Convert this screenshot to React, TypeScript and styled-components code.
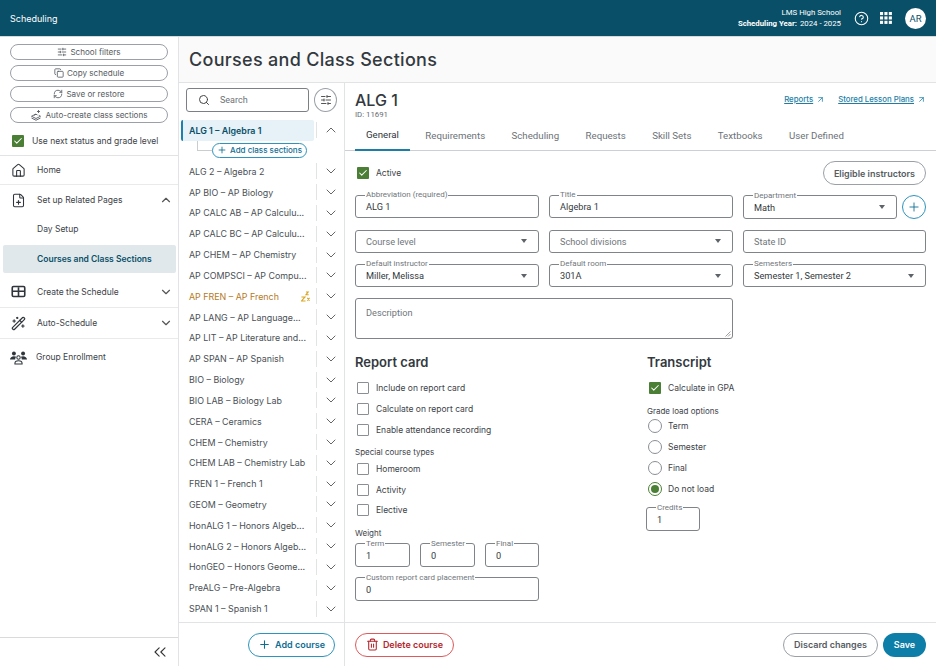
import React from "react";
import styled, { createGlobalStyle } from "styled-components";
import {
  ArrowUpRight,
  Check,
  ChevronDown,
  ChevronUp,
  ChevronsLeft,
  CircleHelp,
  Copy,
  FilePlus,
  House,
  Plus,
  RefreshCw,
  Search,
  SlidersHorizontal,
  Trash2,
  WandSparkles,
} from "lucide-react";

const GlobalStyle = createGlobalStyle`
  html, body {
    margin: 0;
    padding: 0;
    background: #fff;
  }
  body {
    font-family: "Inter", "Liberation Sans", sans-serif;
    color: #3d4349;
  }
  * {
    box-sizing: border-box;
  }
`;

const courses = [
  "ALG 2 – Algebra 2",
  "AP BIO – AP Biology",
  "AP CALC AB – AP Calculu...",
  "AP CALC BC – AP Calculu...",
  "AP CHEM – AP Chemistry",
  "AP COMPSCI – AP Compu...",
  "AP FREN – AP French",
  "AP LANG – AP Language...",
  "AP LIT – AP Literature and...",
  "AP SPAN – AP Spanish",
  "BIO – Biology",
  "BIO LAB – Biology Lab",
  "CERA – Ceramics",
  "CHEM – Chemistry",
  "CHEM LAB – Chemistry Lab",
  "FREN 1 – French 1",
  "GEOM – Geometry",
  "HonALG 1 – Honors Algeb...",
  "HonALG 2 – Honors Algeb...",
  "HonGEO – Honors Geome...",
  "PreALG – Pre-Algebra",
  "SPAN 1 – Spanish 1",
];

const tabs = ["General", "Requirements", "Scheduling", "Requests", "Skill Sets", "Textbooks", "User Defined"];

const AutoIcon = () => (
  <svg width="12" height="12" viewBox="0 0 24 24" fill="none" stroke="currentColor" strokeWidth="1.8">
    <path d="M12 10 3 14.5l9 4.5 9-4.5-3.5-1.8" />
    <path d="M3 18l9 4.5 9-4.5" />
    <path d="M8 12.5l4-2 3 1.5" />
    <path d="M17 2v6M14 5h6" />
  </svg>
);

const ScheduleIcon = () => (
  <svg width="15" height="15" viewBox="0 0 24 24" fill="none" stroke="#2f353a" strokeWidth="2.6">
    <rect x="2" y="4" width="20" height="16" rx="2" />
    <path d="M2 11.5h20M12 5v15" />
  </svg>
);

const GroupIcon = () => (
  <svg width="17" height="15" viewBox="0 0 26 22" fill="#2f353a">
    <circle cx="6" cy="5" r="3" />
    <circle cx="20" cy="5" r="3" />
    <path d="M0 14c0-3 3-5 6-5 1.500 0 2.500.4 3.400 1-1 1-1.500 2.400-1.500 4z" />
    <path d="M26 14c0-3-3-5-6-5-1.500 0-2.500.4-3.400 1 1 1 1.500 2.400 1.500 4z" />
    <circle cx="13" cy="11" r="2.600" fill="none" stroke="#2f353a" strokeWidth="1.600" />
    <path d="M7.500 21v-1c0-2.500 2.500-4 5.500-4s5.500 1.500 5.500 4v1z" fill="none" stroke="#2f353a" strokeWidth="1.600" />
  </svg>
);

const SleepIcon = () => (
  <svg width="9" height="11" viewBox="0 0 20 24" fill="none" stroke="#d9a520" strokeWidth="2.4">
    <path d="M1 13h8L1 22h9" />
    <path d="M11 2h5l-5 6h6" />
    <path d="M14 15l5 6M19 15l-5 6" />
  </svg>
);

const GridIcon = () => (
  <svg width="12" height="12" viewBox="0 0 12 12" fill="#fff">
    {[0, 4.4, 8.8].map((y) =>
      [0, 4.4, 8.8].map((x) => <rect key={`${x}-${y}`} x={x} y={y} width="3.1" height="3.1" />)
    )}
  </svg>
);

const ResizeIcon = () => (
  <svg width="6" height="6" viewBox="0 0 6 6" stroke="#777" strokeWidth="0.7">
    <path d="M0.5 5.5 5.5 0.5M3 5.5 5.5 3" />
  </svg>
);

const Field = ({
  label,
  value,
  placeholder,
  select,
  width,
}: {
  label?: string;
  value?: string;
  placeholder?: string;
  select?: boolean;
  width?: number;
}) => (
  <FieldBox $width={width} $plain={!label}>
    {label && <FieldLabel>{label}</FieldLabel>}
    <FieldRow $plain={!label}>
      {value ? <FieldValue>{value}</FieldValue> : <FieldHint>{placeholder}</FieldHint>}
      {select && <Caret />}
    </FieldRow>
  </FieldBox>
);

const CheckRow = ({ label, on }: { label: string; on?: boolean }) => (
  <OptionRow>
    <CheckBox $on={on}>{on && <Check size={10} color="#fff" strokeWidth={2.5} />}</CheckBox>
    <OptionText>{label}</OptionText>
  </OptionRow>
);

const RadioRow = ({ label, on }: { label: string; on?: boolean }) => (
  <RadioLine>
    <RadioOuter $on={on}>{on && <RadioDot />}</RadioOuter>
    <OptionText>{label}</OptionText>
  </RadioLine>
);

export default function App() {
  return (
    <Page>
      <GlobalStyle />
      <TopBar>
        <AppName>Scheduling</AppName>
        <TopRight>
          <SchoolInfo>
            <span>LMS High School</span>
            <span>
              <b>Scheduling Year:</b> 2024 - 2025
            </span>
          </SchoolInfo>
          <CircleHelp size={15} color="#fff" strokeWidth={1.7} />
          <GridIcon />
          <Avatar>AR</Avatar>
        </TopRight>
      </TopBar>

      <Body>
        <Sidebar>
          <SideActions>
            <PillButton>
              <SlidersHorizontal size={10} />
              School filters
            </PillButton>
            <PillButton>
              <Copy size={10} />
              Copy schedule
            </PillButton>
            <PillButton>
              <RefreshCw size={10} />
              Save or restore
            </PillButton>
            <PillButton>
              <AutoIcon />
              Auto-create class sections
            </PillButton>
          </SideActions>
          <NextStatus>
            <CheckBox $on>
              <Check size={10} color="#fff" strokeWidth={2.5} />
            </CheckBox>
            Use next status and grade level
          </NextStatus>
          <NavItem $h={29}>
            <House size={15} color="#2f353a" strokeWidth={1.7} />
            <NavLabel>Home</NavLabel>
          </NavItem>
          <NavItem $h={30} $flat>
            <FilePlus size={15} color="#2f353a" strokeWidth={1.7} />
            <NavLabel>Set up Related Pages</NavLabel>
            <ChevronUp size={14} color="#555" />
          </NavItem>
          <SubItem>Day Setup</SubItem>
          <ActiveSub>Courses and Class Sections</ActiveSub>
          <NavItem $h={32}>
            <ScheduleIcon />
            <NavLabel>Create the Schedule</NavLabel>
            <ChevronDown size={14} color="#555" />
          </NavItem>
          <NavItem $h={31}>
            <WandSparkles size={15} color="#2f353a" strokeWidth={1.9} />
            <NavLabel>Auto-Schedule</NavLabel>
            <ChevronDown size={14} color="#555" />
          </NavItem>
          <GroupItem $h={36} $flat>
            <GroupIcon />
            <NavLabel>Group Enrollment</NavLabel>
          </GroupItem>
          <Collapse>
            <ChevronsLeft size={20} color="#333" strokeWidth={1.3} />
          </Collapse>
        </Sidebar>

        <Main>
          <TitleBar>Courses and Class Sections</TitleBar>
          <Columns>
            <ListPane>
              <SearchRow>
                <SearchBox>
                  <Search size={12} color="#444" />
                  Search
                </SearchBox>
                <FilterButton>
                  <SlidersHorizontal size={12} color="#555" />
                </FilterButton>
              </SearchRow>
              <CourseList>
                <CourseRow>
                  <SelectedCourse>ALG 1 – Algebra 1</SelectedCourse>
                  <RowToggle>
                    <ChevronUp size={16} color="#666" strokeWidth={1.5} />
                  </RowToggle>
                </CourseRow>
                <SectionRow>
                  <Connector />
                  <AddSections>
                    <Plus size={10} />
                    Add class sections
                  </AddSections>
                </SectionRow>
                {courses.map((course) => {
                  const warn = course.startsWith("AP FREN");
                  return (
                    <CourseRow key={course}>
                      <CourseName $warn={warn}>
                        {course}
                        {warn && <SleepIcon />}
                      </CourseName>
                      <RowToggle>
                        <ChevronDown size={16} color="#666" strokeWidth={1.5} />
                      </RowToggle>
                    </CourseRow>
                  );
                })}
              </CourseList>
              <ListFooter>
                <OutlineAction>
                  <Plus size={13} />
                  Add course
                </OutlineAction>
              </ListFooter>
            </ListPane>

            <DetailPane>
              <DetailHead>
                <div>
                  <CourseTitle>ALG 1</CourseTitle>
                  <CourseId>ID: 11691</CourseId>
                </div>
                <HeadLinks>
                  <HeadLink>
                    <u>Reports</u>
                    <ArrowUpRight size={9} />
                  </HeadLink>
                  <HeadLink>
                    <u>Stored Lesson Plans</u>
                    <ArrowUpRight size={9} />
                  </HeadLink>
                </HeadLinks>
              </DetailHead>
              <TabBar>
                {tabs.map((tab, i) => (
                  <Tab key={tab} $active={i === 0}>
                    {tab}
                  </Tab>
                ))}
              </TabBar>

              <FormArea>
                <ActiveRow>
                  <CheckRow label="Active" on />
                  <GhostButton>Eligible instructors</GhostButton>
                </ActiveRow>
                <FieldGrid>
                  <Field label="Abbreviation (required)" value="ALG 1" />
                  <Field label="Title" value="Algebra 1" />
                  <DepartmentCell>
                    <Field label="Department" value="Math" select />
                    <RoundAdd>
                      <Plus size={14} strokeWidth={1.5} />
                    </RoundAdd>
                  </DepartmentCell>
                  <Field placeholder="Course level" select />
                  <Field placeholder="School divisions" select />
                  <Field placeholder="State ID" />
                  <Field label="Default instructor" value="Miller, Melissa" select />
                  <Field label="Default room" value="301A" select />
                  <Field label="Semesters" value="Semester 1, Semester 2" select />
                  <Description>
                    <FieldHint>Description</FieldHint>
                    <ResizeHandle>
                      <ResizeIcon />
                    </ResizeHandle>
                  </Description>
                </FieldGrid>

                <Sections>
                  <ReportColumn>
                    <SectionTitle>Report card</SectionTitle>
                    <CheckRow label="Include on report card" />
                    <CheckRow label="Calculate on report card" />
                    <CheckRow label="Enable attendance recording" />
                    <SmallHeading>Special course types</SmallHeading>
                    <CheckRow label="Homeroom" />
                    <CheckRow label="Activity" />
                    <CheckRow label="Elective" />
                    <WeightHeading>Weight</WeightHeading>
                    <WeightRow>
                      <Field label="Term" value="1" />
                      <Field label="Semester" value="0" />
                      <Field label="Final" value="0" />
                    </WeightRow>
                    <Field label="Custom report card placement" value="0" width={184} />
                  </ReportColumn>
                  <TranscriptColumn>
                    <SectionTitle>Transcript</SectionTitle>
                    <CheckRow label="Calculate in GPA" on />
                    <GradeHeading>Grade load options</GradeHeading>
                    <RadioRow label="Term" />
                    <RadioRow label="Semester" />
                    <RadioRow label="Final" />
                    <RadioRow label="Do not load" on />
                    <CreditsWrap>
                      <Field label="Credits" value="1" width={54} />
                    </CreditsWrap>
                  </TranscriptColumn>
                </Sections>
              </FormArea>

              <DetailFooter>
                <DangerButton>
                  <Trash2 size={13} />
                  Delete course
                </DangerButton>
                <FooterRight>
                  <GhostButton>Discard changes</GhostButton>
                  <SaveButton>Save</SaveButton>
                </FooterRight>
              </DetailFooter>
            </DetailPane>
          </Columns>
        </Main>
      </Body>
    </Page>
  );
}

const Page = styled.div`
  width: 936px;
  height: 666px;
  display: flex;
  flex-direction: column;
  overflow: hidden;
`;

const TopBar = styled.header`
  height: 37px;
  flex: none;
  background: #0a4f68;
  color: #fff;
  display: flex;
  align-items: center;
  justify-content: space-between;
  padding: 0 10px 0 10px;
  border-bottom: 1px solid #d5dadd;
`;

const AppName = styled.div`
  font-size: 9px;
`;

const TopRight = styled.div`
  display: flex;
  align-items: center;
  gap: 11px;
`;

const SchoolInfo = styled.div`
  display: flex;
  flex-direction: column;
  align-items: flex-end;
  font-family: "Roboto", sans-serif;
  font-size: 7.8px;
  line-height: 10.5px;
  margin-right: 2px;
  padding-top: 1px;
  b {
    font-weight: 700;
    margin-right: 1px;
  }
`;

const Avatar = styled.div`
  width: 21px;
  height: 21px;
  border-radius: 50%;
  background: #fff;
  color: #0a4f68;
  font-family: "Roboto", sans-serif;
  font-size: 9.5px;
  display: flex;
  align-items: center;
  justify-content: center;
  margin-left: 2px;
`;

const Body = styled.div`
  flex: 1;
  display: flex;
  min-height: 0;
`;

const Sidebar = styled.aside`
  width: 179px;
  flex: none;
  border-right: 1px solid #e1e3e5;
  display: flex;
  flex-direction: column;
`;

const SideActions = styled.div`
  display: flex;
  flex-direction: column;
  gap: 5px;
  padding: 7px 10px 0;
`;

const PillButton = styled.button`
  height: 16px;
  border: 1px solid #9aa0a6;
  border-radius: 8px;
  background: #fff;
  color: #565c62;
  font-family: "Inter", sans-serif;
  font-size: 8.1px;
  display: flex;
  align-items: center;
  justify-content: center;
  gap: 3px;
  padding: 0;
`;

const NextStatus = styled.div`
  height: 33px;
  display: flex;
  align-items: center;
  gap: 8px;
  padding: 3px 0 0 12px;
  font-size: 8.5px;
  color: #3d4349;
  border-bottom: 1px solid #e1e3e5;
`;

const NavItem = styled.div<{ $h: number; $flat?: boolean }>`
  height: ${(p) => p.$h}px;
  flex: none;
  display: flex;
  align-items: center;
  gap: 11px;
  padding: 0 5px 0 11px;
  font-size: 8.5px;
  color: #3d4349;
  border-bottom: ${(p) => (p.$flat ? "none" : "1px solid #e8eaeb")};
`;

const GroupItem = styled(NavItem)`
  gap: 9px;
  padding-left: 10px;
`;

const NavLabel = styled.span`
  flex: 1;
`;

const SubItem = styled.div`
  height: 30px;
  padding: 0 0 0 37px;
  display: flex;
  align-items: center;
  font-size: 8.5px;
  margin-top: -1px;
`;

const ActiveSub = styled.div`
  height: 28px;
  flex: none;
  margin: 1px 2px 3px 3px;
  padding-left: 34px;
  display: flex;
  align-items: center;
  border-radius: 2px;
  background: #e0e8eb;
  color: #0a4f68;
  font-size: 8.5px;
  font-weight: 600;
`;

const Collapse = styled.div`
  margin-top: auto;
  height: 29px;
  border-top: 1px solid #d8dadc;
  display: flex;
  align-items: center;
  justify-content: flex-end;
  padding-right: 8px;
`;

const Main = styled.main`
  flex: 1;
  min-width: 0;
  display: flex;
  flex-direction: column;
`;

const TitleBar = styled.h1`
  height: 46px;
  flex: none;
  margin: 0;
  padding: 0 0 0 10px;
  background: #fafafa;
  border-bottom: 1px solid #e1e3e5;
  display: flex;
  align-items: center;
  font-size: 18px;
  font-weight: 500;
  letter-spacing: 0.3px;
  color: #33393e;
`;

const Columns = styled.div`
  flex: 1;
  display: flex;
  min-height: 0;
`;

const ListPane = styled.section`
  width: 166px;
  flex: none;
  border-right: 1px solid #e1e3e5;
  display: flex;
  flex-direction: column;
`;

const SearchRow = styled.div`
  display: flex;
  gap: 5px;
  padding: 5px 7px 0;
`;

const SearchBox = styled.div`
  width: 123px;
  height: 24px;
  border: 1px solid #7b8085;
  border-radius: 3px;
  display: flex;
  align-items: center;
  gap: 10px;
  padding-left: 11px;
  font-family: "Roboto", sans-serif;
  font-size: 9px;
  color: #6c7278;
`;

const FilterButton = styled.div`
  width: 23px;
  height: 24px;
  border: 1px solid #9aa0a6;
  border-radius: 50%;
  display: flex;
  align-items: center;
  justify-content: center;
`;

const CourseList = styled.div`
  flex: 1;
  padding: 8px 0 0 2px;
  display: flex;
  flex-direction: column;
`;

const CourseRow = styled.div`
  height: 20.83px;
  flex: none;
  display: flex;
  align-items: center;
`;

const CourseName = styled.div<{ $warn?: boolean }>`
  width: 133px;
  height: 100%;
  padding: 0 4px 0 8px;
  display: flex;
  align-items: center;
  justify-content: space-between;
  font-size: 8.9px;
  white-space: nowrap;
  color: ${(p) => (p.$warn ? "#b57a1e" : "#4a5056")};
`;

const SelectedCourse = styled(CourseName)`
  background: #e6f1f8;
  border-left: 2px solid #1c82ad;
  border-radius: 2px;
  padding-left: 6px;
  color: #0a4f68;
  font-weight: 600;
`;

const RowToggle = styled.div`
  margin-left: 2px;
  width: 28px;
  height: 16px;
  border-left: 1px solid #e1e3e5;
  display: flex;
  align-items: center;
  justify-content: center;
`;

const SectionRow = styled.div`
  height: 20px;
  flex: none;
  display: flex;
  align-items: flex-start;
  padding: 2px 0 0 16px;
`;

const Connector = styled.div`
  width: 15px;
  height: 10px;
  flex: none;
  margin-top: -2px;
  border-left: 1px solid #c9cdd0;
  border-bottom: 1px solid #c9cdd0;
`;

const AddSections = styled.button`
  width: 95px;
  height: 15px;
  flex: none;
  padding: 0;
  border: 1px solid #2c94be;
  border-radius: 8px;
  background: #fff;
  color: #0f6d92;
  font-family: "Inter", sans-serif;
  font-size: 8px;
  font-weight: 500;
  display: flex;
  align-items: center;
  justify-content: center;
  gap: 3px;
`;

const ListFooter = styled.div`
  height: 44px;
  flex: none;
  border-top: 1px solid #e1e3e5;
  display: flex;
  align-items: center;
  justify-content: flex-end;
  padding-right: 9px;
`;

const OutlineAction = styled.button`
  height: 24px;
  width: 87px;
  padding: 0;
  border: 1px solid #2c94be;
  border-radius: 12px;
  background: #fff;
  color: #0f6d92;
  font-family: "Inter", sans-serif;
  font-size: 9px;
  font-weight: 600;
  display: flex;
  align-items: center;
  justify-content: center;
  gap: 4px;
`;

const DetailPane = styled.section`
  flex: 1;
  min-width: 0;
  display: flex;
  flex-direction: column;
`;

const DetailHead = styled.div`
  height: 39px;
  flex: none;
  display: flex;
  justify-content: space-between;
  align-items: flex-start;
  padding: 8px 10px 0;
`;

const CourseTitle = styled.div`
  font-size: 16px;
  font-weight: 500;
  line-height: 18px;
  color: #33393e;
`;

const CourseId = styled.div`
  font-family: "Roboto", sans-serif;
  font-size: 7.8px;
  line-height: 11px;
  color: #666c72;
`;

const HeadLinks = styled.div`
  display: flex;
  gap: 13px;
  padding-top: 3px;
`;

const HeadLink = styled.a`
  display: flex;
  align-items: center;
  gap: 3px;
  font-size: 7.8px;
  font-weight: 500;
  color: #1c7ea6;
`;

const TabBar = styled.nav`
  height: 29px;
  flex: none;
  display: flex;
  padding: 0 0 0 10px;
  border-bottom: 1px solid #ccd0d4;
`;

const Tab = styled.div<{ $active?: boolean }>`
  height: 29px;
  padding: 0 11px 2px;
  margin-right: 4.4px;
  display: flex;
  align-items: center;
  font-family: "Roboto", sans-serif;
  font-size: 9.7px;
  color: ${(p) => (p.$active ? "#2f353a" : "#6c7278")};
  border-bottom: ${(p) => (p.$active ? "2px solid #1c7ea6" : "none")};
`;

const FormArea = styled.div`
  flex: 1;
  min-height: 0;
  padding: 0 10px;
`;

const ActiveRow = styled.div`
  height: 44px;
  display: flex;
  align-items: center;
  justify-content: space-between;
`;

const FieldGrid = styled.div`
  display: grid;
  grid-template-columns: 184px 184px 183px;
  column-gap: 10px;
  row-gap: 11px;
`;

const FieldBox = styled.fieldset<{ $width?: number; $plain?: boolean }>`
  width: ${(p) => (p.$width ? `${p.$width}px` : "100%")};
  min-width: 0;
  height: ${(p) => (p.$plain ? "23px" : "27px")};
  margin: ${(p) => (p.$plain ? "0" : "-4px 0 0")};
  padding: 0 11px 0 10px;
  border: 1px solid #7f8489;
  border-radius: 3px;
`;

const FieldLabel = styled.legend`
  padding: 0 1px;
  margin-left: -1px;
  font-family: "Roboto", sans-serif;
  font-size: 8px;
  line-height: 8px;
  color: #70767c;
`;

const FieldRow = styled.div<{ $plain?: boolean }>`
  height: ${(p) => (p.$plain ? "20px" : "15px")};
  display: flex;
  align-items: center;
  justify-content: space-between;
`;

const FieldValue = styled.span`
  font-family: "Roboto", sans-serif;
  font-size: 9.2px;
  color: #33393e;
`;

const FieldHint = styled.span`
  font-family: "Roboto", sans-serif;
  font-size: 9.2px;
  color: #70767c;
`;

const Caret = styled.i`
  width: 0;
  height: 0;
  border-left: 3.5px solid transparent;
  border-right: 3.5px solid transparent;
  border-top: 4px solid #5d6368;
`;

const DepartmentCell = styled.div`
  display: flex;
  align-items: center;
  gap: 5px;
`;

const RoundAdd = styled.div`
  width: 24px;
  height: 24px;
  flex: none;
  border: 1px solid #2c94be;
  border-radius: 50%;
  color: #0f6d92;
  display: flex;
  align-items: center;
  justify-content: center;
`;

const Description = styled.div`
  grid-column: 1 / span 2;
  height: 41px;
  border: 1px solid #7f8489;
  border-radius: 3px;
  padding: 8px 1px 1px 10px;
  display: flex;
  justify-content: space-between;
`;

const ResizeHandle = styled.div`
  align-self: flex-end;
  display: flex;
`;

const Sections = styled.div`
  display: flex;
  margin-top: 14px;
`;

const ReportColumn = styled.div`
  width: 292px;
  flex: none;
  display: flex;
  flex-direction: column;
`;

const TranscriptColumn = styled.div`
  display: flex;
  flex-direction: column;
`;

const SectionTitle = styled.h2`
  margin: 0 0 7px;
  font-size: 13px;
  line-height: 18px;
  font-weight: 600;
  color: #33393e;
`;

const OptionRow = styled.div`
  height: 20.8px;
  flex: none;
  display: flex;
  align-items: center;
  gap: 7px;
  padding-left: 2px;
`;

const CheckBox = styled.span<{ $on?: boolean }>`
  width: 12px;
  height: 12px;
  flex: none;
  display: flex;
  align-items: center;
  justify-content: center;
  border-radius: 1px;
  border: ${(p) => (p.$on ? "none" : "1px solid #8a8f94")};
  background: ${(p) => (p.$on ? "#4b7f35" : "#fff")};
`;

const OptionText = styled.span`
  font-size: 8.5px;
  color: #3d4349;
`;

const SmallHeading = styled.div`
  height: 12px;
  margin-top: 6px;
  display: flex;
  align-items: center;
  font-size: 8px;
  color: #3d4349;
`;

const WeightHeading = styled(SmallHeading)`
  margin-top: 6px;
  margin-bottom: 5px;
`;

const WeightRow = styled.div`
  display: grid;
  grid-template-columns: 55px 55px 54px;
  column-gap: 10px;
  margin-bottom: 11px;
`;

const GradeHeading = styled(SmallHeading)`
  margin-top: 6px;
  margin-bottom: -1px;
`;

const RadioLine = styled(OptionRow)`
  gap: 6px;
  padding-left: 1px;
`;

const RadioOuter = styled.span<{ $on?: boolean }>`
  width: 14px;
  height: 14px;
  flex: none;
  border-radius: 50%;
  border: 1px solid ${(p) => (p.$on ? "#4b7f35" : "#8a8f94")};
  display: flex;
  align-items: center;
  justify-content: center;
`;

const RadioDot = styled.span`
  width: 8px;
  height: 8px;
  border-radius: 50%;
  background: #4b7f35;
`;

const CreditsWrap = styled.div`
  margin: 9px 0 0 -1px;
`;

const DetailFooter = styled.div`
  height: 44px;
  flex: none;
  border-top: 1px solid #e1e3e5;
  display: flex;
  align-items: center;
  justify-content: space-between;
  padding: 0 10px;
`;

const FooterRight = styled.div`
  display: flex;
  gap: 5px;
`;

const GhostButton = styled.button`
  height: 24px;
  padding: 0 10px;
  border: 1px solid #9aa0a6;
  border-radius: 12px;
  background: #fff;
  color: #565c62;
  font-family: "Inter", sans-serif;
  font-size: 9px;
  font-weight: 600;
`;

const SaveButton = styled.button`
  width: 43px;
  height: 24px;
  padding: 0;
  border: none;
  border-radius: 12px;
  background: #0c7ea8;
  color: #fff;
  font-family: "Inter", sans-serif;
  font-size: 9px;
  font-weight: 600;
`;

const DangerButton = styled.button`
  width: 99px;
  height: 24px;
  padding: 0;
  border: 1px solid #df5a5a;
  border-radius: 12px;
  background: #fff;
  color: #b3272d;
  font-family: "Inter", sans-serif;
  font-size: 9px;
  font-weight: 600;
  display: flex;
  align-items: center;
  justify-content: center;
  gap: 4px;
`;
